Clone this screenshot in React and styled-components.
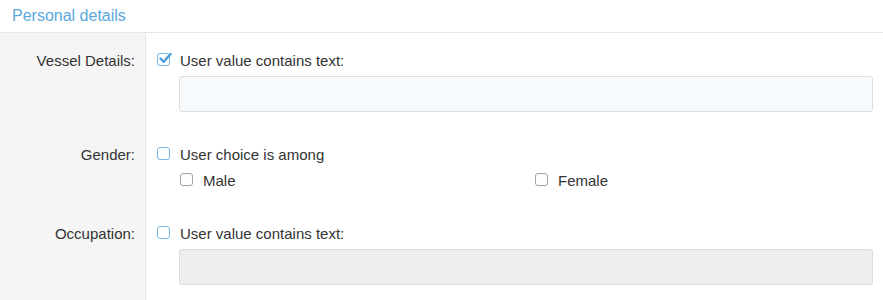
import React from "react";
import styled, { createGlobalStyle } from "styled-components";

const Global = createGlobalStyle`
  html, body { margin: 0; padding: 0; background: #fff; }
  body { font-family: "Liberation Sans", Arial, sans-serif; color: #333; }
`;

const Page = styled.div`
  width: 883px;
  height: 300px;
  overflow: hidden;
  display: flex;
  flex-direction: column;
`;

const Header = styled.div`
  height: 33px;
  box-sizing: border-box;
  border-bottom: 1px solid #e6e6e6;
  display: flex;
  align-items: center;
  padding-left: 12px;
  padding-bottom: 1px;
  font-size: 16px;
  color: #5aa7dd;
`;

const Form = styled.div`
  flex: 1;
  display: grid;
  grid-template-columns: 145px 1fr;
  align-content: start;
  background: linear-gradient(to right, #f5f5f5 0, #f5f5f5 145px, #e6e6e6 145px, #e6e6e6 146px, #fff 146px);
`;

const Label = styled.div`
  padding: 18px 10px 15px 0;
  text-align: right;
  font-size: 15px;
  line-height: 20px;
`;

const Field = styled.div`
  padding: 18px 10px 15px 12px;
  display: flex;
  flex-direction: column;
  gap: 5px;
`;

const CheckRow = styled.label`
  display: flex;
  align-items: flex-start;
  gap: 10px;
  font-size: 15px;
  line-height: 20px;
  white-space: nowrap;
`;

const Box = styled.span`
  width: 13px;
  height: 13px;
  margin-top: 2px;
  box-sizing: border-box;
  border: 1px solid ${(p) => (p.$muted ? "#a3a3a3" : "#79b8e4")};
  border-radius: 3px;
  background: #fff;
  flex: none;
  position: relative;
`;

const Tick = styled.svg`
  position: absolute;
  left: 1px;
  top: -2px;
`;

const Options = styled.div`
  display: grid;
  grid-template-columns: 355px 1fr;
  padding-left: 23px;
  margin-top: 1px;
`;

const TextInput = styled.div`
  height: 36px;
  margin-left: 22px;
  box-sizing: border-box;
  border: 1px solid #dcdcdc;
  border-radius: 3px;
  background: ${(p) => (p.$disabled ? "#eeeeee" : "#f7fafd")};
`;

function Check({ checked, muted, children }) {
  return (
    <CheckRow>
      <Box $muted={muted}>
        {checked && (
          <Tick width="13" height="13" viewBox="0 0 13 13">
            <path d="M1.5 6.5 L4.8 9.8 L11.5 2" fill="none" stroke="#4a9ed9" strokeWidth="2.4" strokeLinecap="round" strokeLinejoin="round" />
          </Tick>
        )}
      </Box>
      {children}
    </CheckRow>
  );
}

export default function App() {
  return (
    <Page>
      <Global />
      <Header>Personal details</Header>
      <Form>
        <Label>Vessel Details:</Label>
        <Field>
          <Check checked>User value contains text:</Check>
          <TextInput />
        </Field>

        <Label>Gender:</Label>
        <Field>
          <Check>User choice is among</Check>
          <Options>
            <Check muted>Male</Check>
            <Check muted>Female</Check>
          </Options>
        </Field>

        <Label>Occupation:</Label>
        <Field>
          <Check>User value contains text:</Check>
          <TextInput $disabled />
        </Field>
      </Form>
    </Page>
  );
}
